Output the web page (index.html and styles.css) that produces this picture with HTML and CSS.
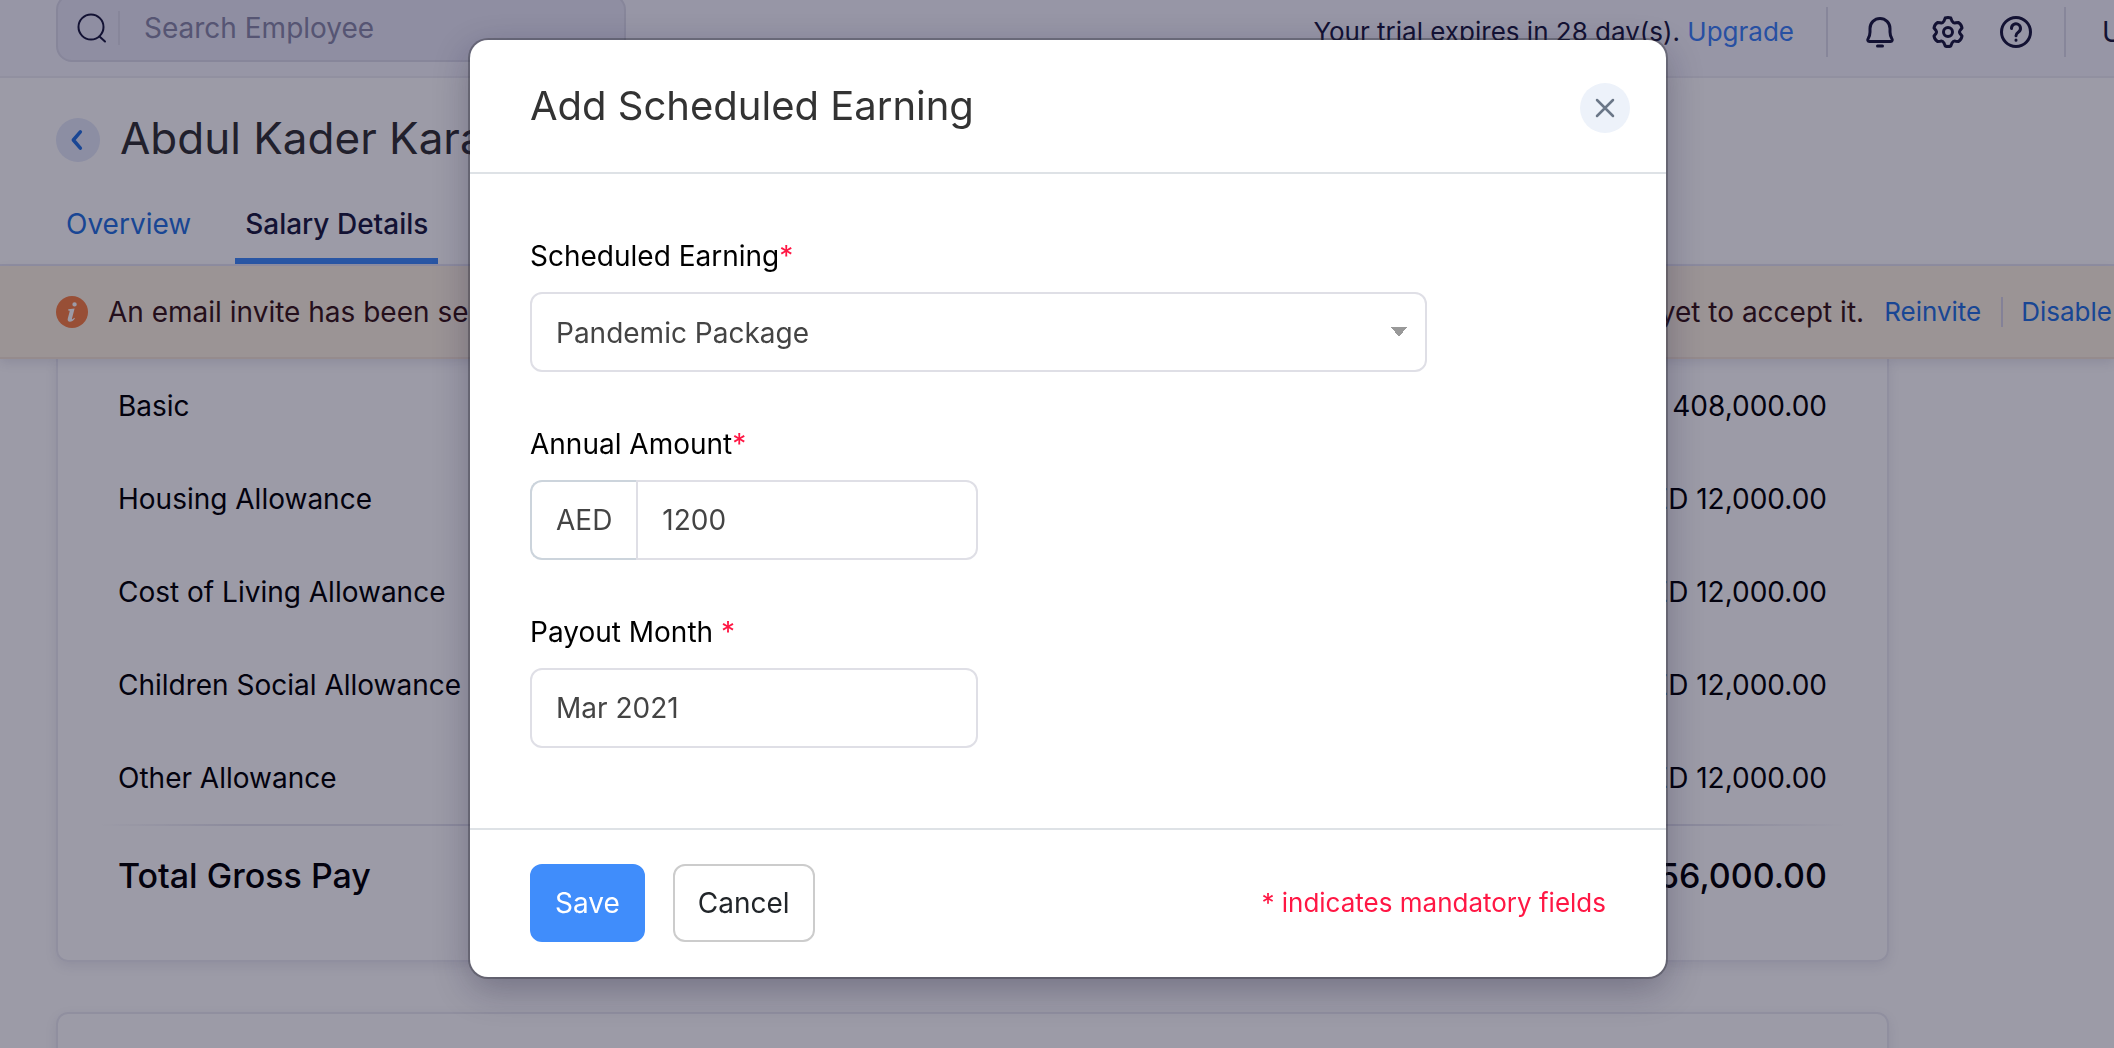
FILE: index.html
```html
<!DOCTYPE html>
<html lang="en">
<head>
    <meta charset="UTF-8">
    <meta name="viewport" content="width=device-width, initial-scale=1.0">
    <title>Salary Details - Add Scheduled Earning</title>
    <link rel="stylesheet" href="styles.css">
</head>
<body>
    <div class="app">
        <header class="topbar">
            <div class="search-box">
                <svg class="icon" viewBox="0 0 32 32" aria-hidden="true">
                    <circle cx="15" cy="15" r="12.5"/>
                    <path d="M23.5 24.5L29 29.5"/>
                </svg>
                <input type="search" placeholder="Search Employee" aria-label="Search Employee">
            </div>
            <div class="topbar-right">
                <p class="trial">Your trial expires in 28 day(s). <a href="#">Upgrade</a></p>
                <div class="topbar-icons">
                    <button type="button" aria-label="Notifications">
                        <svg class="icon" viewBox="0 0 32 32">
                            <path d="M5.500 25.500h21c1.800 0 2.200-1.600 1.300-3-1.200-2-1.800-4-1.800-6.500v-3.500a10 10 0 0 0-20 0V16c0 2.500-.6 4.500-1.800 6.500-.9 1.400-.5 3 1.300 3Z"/>
                            <path d="M13.500 30h5"/>
                        </svg>
                    </button>
                    <button type="button" aria-label="Settings">
                        <svg class="icon" viewBox="0 0 32 32">
                            <path d="M13.200 2Q16 1 18.800 2L20 5Q21.500 7.500 23.500 6.800L26.500 6.500Q29.500 8.500 30 12L28 14.500Q27 16 28 17.500L30 20Q29.500 23.500 26.500 25.500L23.500 25.200Q21.500 24.500 20 27L18.800 30Q16 31 13.200 30L12 27Q10.500 24.500 8.500 25.200L5.500 25.500Q2.500 23.500 2 20L4 17.500Q5 16 4 14.500L2 12Q2.500 8.500 5.500 6.500L8.500 6.800Q10.500 7.500 12 5Z"/>
                            <circle cx="16" cy="16" r="4.5"/>
                        </svg>
                    </button>
                    <button type="button" aria-label="Help">
                        <svg class="icon" viewBox="0 0 32 32">
                            <circle cx="16" cy="16" r="14.5"/>
                            <path d="M11.500 12.500a4.500 4.500 0 1 1 7 3.500c-1.600 1.200-2.500 1.900-2.500 3.800M16 24v.2"/>
                        </svg>
                    </button>
                </div>
                <span class="user">U</span>
            </div>
        </header>

        <div class="page-head">
            <div class="title-row">
                <a class="back" href="#" aria-label="Back">
                    <svg viewBox="0 0 24 24"><path d="M14 5L8 12l6 7"/></svg>
                </a>
                <h1>Abdul Kader Kara</h1>
            </div>
            <nav class="tabs">
                <a href="#">Overview</a>
                <a href="#" class="active">Salary Details</a>
            </nav>
        </div>

        <div class="banner">
            <svg class="info" viewBox="0 0 32 32" aria-hidden="true">
                <circle cx="16" cy="16" r="16"/>
                <path d="M18.600 6.200a2.200 2.200 0 1 1-.1 4.400 2.200 2.200 0 0 1 .1-4.400ZM12.300 13.200l6.300-.6-2.600 9.800c-.2.900.3 1 .9.600l1.400-1.200.6.700c-1.500 2.100-3.300 3.200-5 3.200-1.900 0-2.600-1.200-2.100-3.200l1.800-6.800c.2-.9-.1-1.200-1.500-1.300z"/>
            </svg>
            <span>An email invite has been sent</span>
            <div class="banner-actions">
                <span>yet to accept it.</span>
                <a href="#">Reinvite</a>
                <a href="#">Disable</a>
            </div>
        </div>

        <main>
            <section class="card">
                <table class="salary">
                    <tbody>
                        <tr><td>Basic</td><td>AED 408,000.00</td></tr>
                        <tr><td>Housing Allowance</td><td>AED 12,000.00</td></tr>
                        <tr><td>Cost of Living Allowance</td><td>AED 12,000.00</td></tr>
                        <tr><td>Children Social Allowance</td><td>AED 12,000.00</td></tr>
                        <tr><td>Other Allowance</td><td>AED 12,000.00</td></tr>
                    </tbody>
                    <tfoot>
                        <tr><th scope="row">Total Gross Pay</th><td>AED 456,000.00</td></tr>
                    </tfoot>
                </table>
            </section>
            <section class="card"></section>
        </main>
    </div>

    <div class="backdrop">
        <form class="modal" role="dialog" aria-labelledby="modal-title">
            <div class="modal-header">
                <h2 id="modal-title">Add Scheduled Earning</h2>
                <button type="button" class="close" aria-label="Close">
                    <svg viewBox="0 0 24 24"><path d="M4 4l16 16M20 4L4 20"/></svg>
                </button>
            </div>

            <div class="modal-body">
                <div class="field wide">
                    <label for="earning">Scheduled Earning<span class="required">*</span></label>
                    <select id="earning">
                        <option>Pandemic Package</option>
                    </select>
                </div>
                <div class="field">
                    <label for="amount">Annual Amount<span class="required">*</span></label>
                    <div class="input-group">
                        <span class="prefix">AED</span>
                        <input type="text" id="amount" value="1200">
                    </div>
                </div>
                <div class="field">
                    <label for="month">Payout Month <span class="required">*</span></label>
                    <input type="text" id="month" value="Mar 2021">
                </div>
            </div>

            <div class="modal-footer">
                <button type="button" class="btn btn-primary">Save</button>
                <button type="button" class="btn">Cancel</button>
                <p class="required note">* indicates mandatory fields</p>
            </div>
        </form>
    </div>
</body>
</html>
```
FILE: styles.css
```css
/* General */
* {
    box-sizing: border-box;
}

body {
    margin: 0;
    height: 100vh;
    overflow: hidden;
    font-family: Inter, "Liberation Sans", sans-serif;
    font-size: 28px;
    line-height: 36px;
    color: #000;
    background-color: #fff;
}

h1, h2, p {
    margin: 0;
    font-weight: 400;
}

a {
    color: #2672e0;
    text-decoration: none;
}

button, input, select {
    font: inherit;
    color: inherit;
}

button {
    cursor: pointer;
}

.icon {
    display: block;
    width: 32px;
    height: 32px;
    flex: none;
    fill: none;
    stroke: #1b1b3f;
    stroke-width: 3;
    stroke-linecap: round;
    stroke-linejoin: round;
}

/* Top bar, scrolled slightly out of view */
.app {
    margin-top: -16px;
    white-space: nowrap;
}

.topbar {
    display: flex;
    align-items: center;
    height: 94px;
    padding-left: 56px;
    background-color: #f7f7fe;
    border-bottom: 2px solid #ededf4;
}

.search-box {
    display: flex;
    align-items: center;
    width: 570px;
    height: 68px;
    margin-bottom: 4px;
    padding-left: 18px;
    background-color: #e9e9f7;
    border: 2px solid #dcdcea;
    border-radius: 16px;
}

.search-box .icon {
    stroke-width: 2;
}

.search-box input {
    flex: 1;
    height: 34px;
    margin-left: 10px;
    padding: 0 24px;
    border: 0;
    border-left: 2px solid #dcdcea;
    background: none;
    outline: none;
}

.search-box input::placeholder {
    color: #8a8aa8;
    opacity: 1;
}

.topbar-right {
    display: flex;
    align-items: center;
    margin-left: auto;
    padding-top: 4px;
}

.trial {
    font-size: 26px;
    color: #1b1b3f;
}

.trial a {
    color: #3d82f7;
}

.topbar-icons {
    display: flex;
    align-items: center;
    gap: 36px;
    height: 50px;
    margin-left: 32px;
    padding: 0 32px 0 36px;
    border: solid #dcdcea;
    border-width: 0 2px;
}

.topbar-icons button {
    padding: 0;
    border: 0;
    background: none;
}

.user {
    width: 48px;
    padding-left: 36px;
    overflow: hidden;
    color: #1b1b3f;
}

/* Employee title and tabs */
.page-head {
    padding: 36px 56px 0;
    border-bottom: 2px solid #e8e8f4;
}

.title-row {
    display: flex;
    align-items: center;
    gap: 20px;
    height: 52px;
}

.title-row h1 {
    padding-bottom: 4px;
    font-size: 44px;
    color: #333;
}

.back {
    display: flex;
    align-items: center;
    justify-content: center;
    width: 44px;
    height: 44px;
    border-radius: 50%;
    background-color: #e4e9f9;
}

.back svg {
    width: 28px;
    height: 28px;
    fill: none;
    stroke: #2672e0;
    stroke-width: 3;
    stroke-linecap: round;
    stroke-linejoin: round;
}

.tabs {
    display: flex;
    gap: 34px;
    margin-top: 40px;
}

.tabs a {
    height: 58px;
    padding: 0 10px;
}

.tabs .active {
    font-weight: 500;
    color: #1b1b3f;
    border-bottom: 6px solid #408dfb;
}

/* Invite banner */
.banner {
    position: relative;
    display: flex;
    align-items: center;
    height: 93px;
    padding: 0 2px 0 56px;
    color: #381616;
    background-color: #fef3e2;
    border-bottom: 2px solid #f4e4d4;
    box-shadow: 0 4px 10px rgba(60, 60, 110, 0.12);
}

.info {
    width: 32px;
    height: 32px;
    margin-right: 20px;
    fill: #fff;
}

.info circle {
    fill: #f98144;
}

.banner-actions {
    display: flex;
    align-items: center;
    margin-left: auto;
}

.banner-actions a {
    margin-left: 20px;
    font-size: 26px;
}

.banner-actions a + a {
    padding-left: 18px;
    line-height: 30px;
    border-left: 2px solid #d8d4e4;
}

/* Salary table */
main {
    padding: 0 225px 0 56px;
}

.card {
    min-height: 140px;
    margin-bottom: 50px;
    padding: 0 42px 32px;
    border: 2px solid #ebebf2;
    border-radius: 12px;
    box-shadow: 0 4px 12px rgba(60, 60, 110, 0.1);
}

.card:first-child {
    border-top: 0;
    border-radius: 0 0 12px 12px;
}

.salary {
    width: 100%;
    border-collapse: collapse;
}

.salary td,
.salary th {
    height: 93px;
    padding: 0 18px;
    text-align: left;
    font-weight: 400;
}

.salary td:last-child {
    text-align: right;
}

.salary tfoot tr {
    background: linear-gradient(90deg, transparent, #e4e4ee 8%, #e4e4ee 92%, transparent) top / 100% 2px no-repeat;
}

.salary tfoot th,
.salary tfoot td {
    height: 104px;
    font-size: 34px;
    font-weight: 500;
}

/* Modal */
.backdrop {
    position: fixed;
    inset: 0;
    display: flex;
    align-items: flex-start;
    justify-content: center;
    padding: 40px 0 0 22px;
    background-color: rgba(8, 5, 35, 0.4);
}

.modal {
    width: 1196px;
    max-width: 100%;
    background-color: #fff;
    border-radius: 18px;
    box-shadow: 0 0 0 2px rgba(40, 40, 50, 0.35), 0 12px 36px rgba(20, 15, 50, 0.3);
}

.modal-header {
    display: flex;
    align-items: center;
    justify-content: space-between;
    height: 134px;
    padding: 0 36px 0 60px;
    border-bottom: 2px solid #dee2e6;
}

.modal-header h2 {
    font-size: 40px;
    color: #333;
}

.close {
    display: flex;
    align-items: center;
    justify-content: center;
    width: 50px;
    height: 50px;
    margin-top: 4px;
    padding: 0;
    border: 0;
    border-radius: 50%;
    background-color: #edf2fa;
}

.close svg {
    width: 24px;
    height: 24px;
    fill: none;
    stroke: #6b7788;
    stroke-width: 2.5;
    stroke-linecap: round;
}

.modal-body {
    display: flex;
    flex-direction: column;
    gap: 54px;
    padding: 64px 60px 80px;
}

.field {
    width: 448px;
    max-width: 100%;
}

.field.wide {
    width: 897px;
}

.field label {
    display: block;
    margin-bottom: 18px;
}

.required {
    color: #ff1744;
}

.field input,
.field select {
    display: block;
    width: 100%;
    height: 80px;
    padding: 0 24px;
    color: #444;
    background-color: #fff;
    border: 2px solid #dfdfe6;
    border-radius: 12px;
    outline: none;
}

.field select {
    padding-top: 2px;
    appearance: none;
    background-image: linear-gradient(to bottom left, #999 50%, transparent 50%), linear-gradient(to bottom right, #999 50%, transparent 50%);
    background-position: right 26px center, right 18px center;
    background-size: 8px 10px;
    background-repeat: no-repeat;
}

.input-group {
    display: flex;
}

.prefix {
    display: flex;
    align-items: center;
    padding: 0 24px;
    color: #444;
    border: 2px solid #ccd4dc;
    border-right: 0;
    border-radius: 12px 0 0 12px;
}

.input-group input {
    flex: 1;
    min-width: 0;
    border-radius: 0 12px 12px 0;
}

.modal-footer {
    display: flex;
    align-items: center;
    gap: 28px;
    padding: 34px 60px 35px;
    border-top: 2px solid #dee2e6;
}

.btn {
    height: 78px;
    padding: 0 23px;
    color: #212529;
    background-color: #fff;
    border: 2px solid #ccc;
    border-radius: 12px;
}

.btn-primary {
    color: #fff;
    background-color: #408dfb;
    border-color: #408dfb;
}

.note {
    margin-left: auto;
    font-size: 26px;
}
```
